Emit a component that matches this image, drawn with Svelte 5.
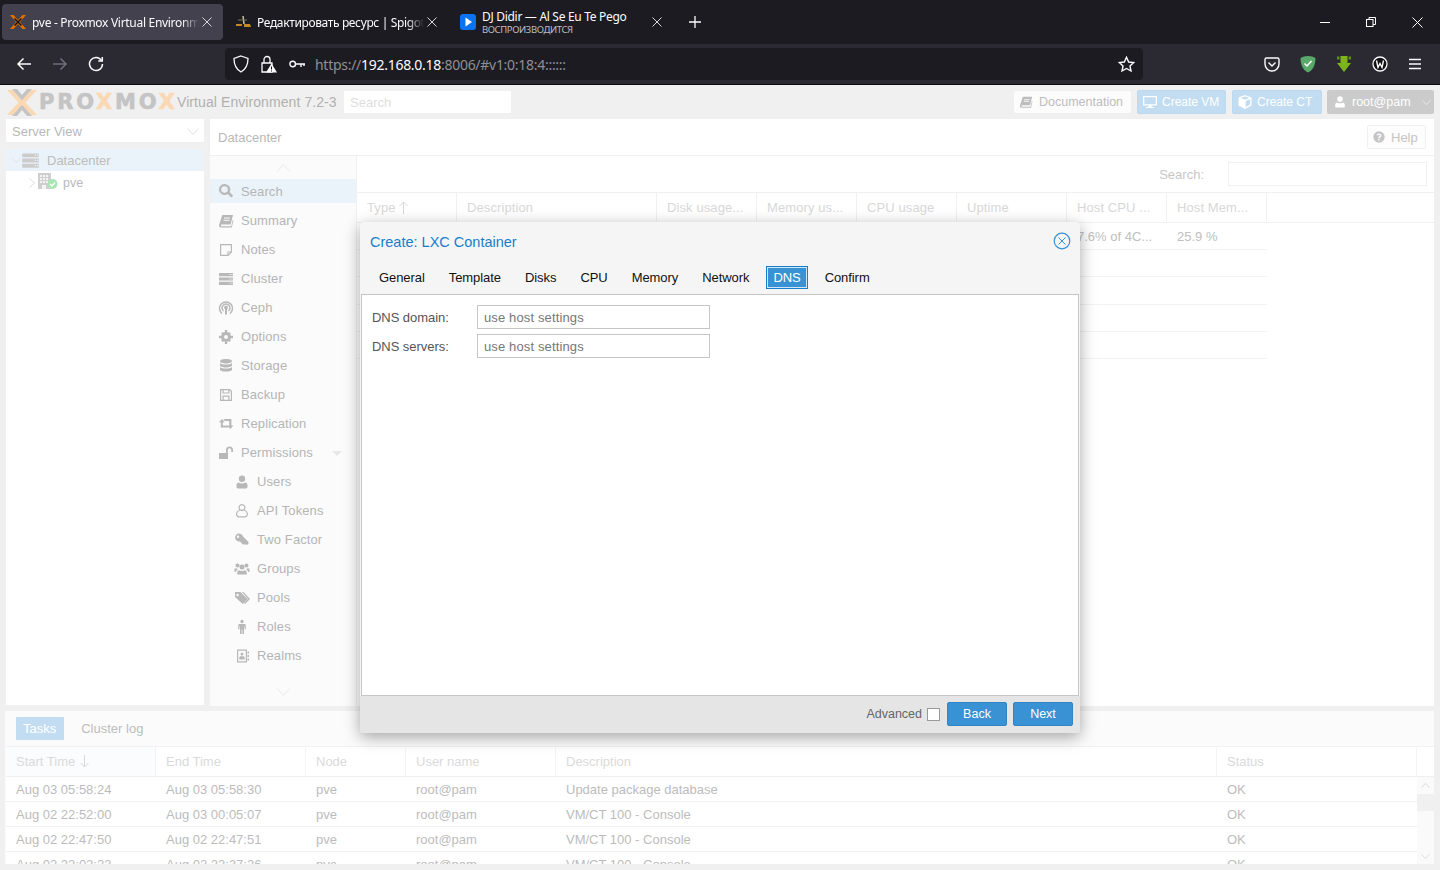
<script>
  const P = {
    search: 'M6.5 1a5.5 5.5 0 1 0 3.2 10l3.6 3.6 1.9-1.9-3.6-3.6A5.5 5.5 0 0 0 6.5 1zm0 2.2a3.3 3.3 0 1 1 0 6.6 3.3 3.3 0 0 1 0-6.6z',
    book: 'M4.3 2H15l-2.4 9.6H3.6c-.9 0-1 1.7 0 1.7h9.6l1.5-6.4.7.5-1.6 7.1H2.8C1.3 14.5.8 13 1.2 11.6zM6 4.5v1h6v-1zm-.5 2.2v1h6v-1z',
    note: 'M2 2h12v8.3L10.3 14H2zm1.2 1.2v9.6h6.2V9.4h3.4V3.2zm7.3 9 1.6-1.7h-1.6z',
    server: 'M1 2h14v3.2H1zm10.5 1v1h1V3zm2 0v1h1V3zM1 6.4h14v3.2H1zm10.5 1v1h1v-1zm2 0v1h1v-1zM1 10.8h14V14H1zm10.5 1v1h1v-1zm2 0v1h1v-1z',
    gear: 'M6.8 1h2.4v3H6.8zM6.8 12h2.4v3H6.8zM1 6.8h3v2.4H1zM12 6.8h3v2.4h-3zM3 4.7 4.7 3l1.8 1.8-1.7 1.7zM11.3 3 13 4.7l-1.8 1.8-1.7-1.7zM13 11.3 11.3 13l-1.8-1.8 1.7-1.7zM4.7 13 3 11.3l1.8-1.8 1.7 1.7zM8 3a5 5 0 1 1 0 10A5 5 0 1 1 8 3zm0 3a2 2 0 1 0 0 4 2 2 0 1 0 0-4z',
    db: 'M8 1c3.3 0 6 .9 6 2.2S11.3 5.4 8 5.4 2 4.5 2 3.2 4.7 1 8 1zM2 5c1 1 3.5 1.5 6 1.5S13 6 14 5v2.2C14 8.5 11.3 9.4 8 9.4S2 8.5 2 7.2zm0 4c1 1 3.5 1.5 6 1.5S13 10 14 9v2.4c0 1.3-2.7 2.2-6 2.2s-6-.9-6-2.2z',
    floppy: 'M2 2h10l2 2v10H2zm1.2 1.2v9.6h1.3V8.5h7v4.3h1.3V4.6l-1.2-1.4h-.1v3.3H4.5V3.2zm2.5 0v2.3h4.6V3.2zm0 6.5v3.1h4.6V9.7z',
    retweet: 'M4 3 .8 6.3h2v5.2h8l-1.7-2H4.8V6.3h2zM5.2 3l1.7 2h4.3v4.4h-2L12.4 13l3-3.6h-2V3z',
    unlock: 'M1 8h9v6H1zM8 8V5a3.5 3.5 0 0 1 7 0v2h-1.8V5a1.7 1.7 0 0 0-3.4 0v3z',
    user: 'M8 1.5a3.2 3.2 0 1 1 0 6.4 3.2 3.2 0 0 1 0-6.4zM4.5 8.5c1 .7 2.2 1 3.5 1s2.5-.3 3.5-1c1.3.3 2 1.5 2 3.2V13c0 .8-.7 1.4-1.5 1.4H4c-.8 0-1.5-.6-1.5-1.4v-1.300c0-1.700.7-2.900 2-3.200z',
    usero: 'M8 1a3.5 3.5 0 0 1 2.700 5.700c1.800.7 3.300 2.300 3.300 4.400 0 1.900-1.500 3.400-3.300 3.400H5.300A3.400 3.400 0 0 1 2 11.100c0-2.100 1.500-3.700 3.300-4.400A3.500 3.500 0 0 1 8 1zm0 1.200a2.300 2.300 0 1 0 0 4.600 2.300 2.300 0 0 0 0-4.600zM6.200 7.600c-1.800.5-3 1.900-3 3.500 0 1.200 1 2.200 2.100 2.200h5.400c1.100 0 2.100-1 2.100-2.200 0-1.600-1.200-3-3-3.500a3.500 3.500 0 0 1-3.600 0z',
    key: 'M5 1.5a4 4 0 0 1 3.800 2.800L14.500 10v1.500L13 13l-1-1-.9.9-1-1-.9.9L6 9.400A4 4 0 1 1 5 1.500zM4 3.500a1.200 1.200 0 1 0 0 2.400 1.200 1.200 0 0 0 0-2.400z',
    users: 'M3.5 2.5a2 2 0 1 1 0 4 2 2 0 0 1 0-4zm9 0a2 2 0 1 1 0 4 2 2 0 0 1 0-4zM8 3.500a2.500 2.500 0 1 1 0 5 2.500 2.500 0 0 1 0-5zM.5 7.500h3c-.3.5-.2 1-.1 1.500-.8.4-1.400 1-1.700 2H.5zm12 0h3V11h-1.200c-.3-1-.9-1.600-1.700-2 .1-.5.2-1-.1-1.500zM5 9.200c1.800 1 4.200 1 6 0 1.200.5 1.800 1.400 1.800 2.800v1.500H3.200V12c0-1.400.6-2.300 1.800-2.800z',
    tags: 'M1 2h5.500l7 7-4.800 5-7.700-7zm2.500 1.800a1.200 1.200 0 1 0 0 2.400 1.200 1.200 0 0 0 0-2.400zM8 2h1.500l6.500 7-5 5-1-1 4-4z',
    male: 'M8 .8a1.700 1.700 0 1 1 0 3.400A1.700 1.700 0 0 1 8 .8zM5 5h6l.8 1v4.300h-1.300V7h-.5v8H8.400v-4.500h-.8V15H6V7h-.5v3.300H4.200V6z',
    contact: 'M3 1.500h10v13H3zm1.200 1.200v10.600h7.600V2.700zM8 4.500a1.500 1.500 0 1 1 0 3 1.500 1.500 0 0 1 0-3zM5.300 11.500V9.800c0-.9.700-1.500 1.300-1.500h2.800c.6 0 1.300.6 1.300 1.500v1.700zM13.500 3.500H15v2h-1.500zm0 3.500H15v2h-1.500zm0 3.500H15v2h-1.500z',
    monitor: 'M1 2h14v9.500H9.500v1.500H12v1H4v-1h2.500v-1.500H1zm1.300 1.300v6.900h11.400V3.300z',
    cube: 'M8 1l6.500 2.500v8L8 15l-6.500-3.500v-8zM3.700 4 8 5.700 12.300 4 8 2.400zM8.700 7v6l4.500-2.400V5.200z',
    help: 'M8 1.500a6.500 6.500 0 1 1 0 13 6.500 6.500 0 0 1 0-13zM8 4C6.500 4 5.500 4.800 5.300 6l1.500.4c.1-.6.5-1 1.200-1s1.100.4 1.100.9c0 1-2 1.100-2 2.900v.3h1.700c0-1.300 2-1.300 2-3.300C10.800 4.900 9.600 4 8 4zM7.100 10.300V12h1.700v-1.700z'
  };

  const menu = [
    { t: 'Search', i: 'search', sel: true },
    { t: 'Summary', i: 'book' },
    { t: 'Notes', i: 'note' },
    { t: 'Cluster', i: 'server' },
    { t: 'Ceph', i: 'ceph' },
    { t: 'Options', i: 'gear' },
    { t: 'Storage', i: 'db' },
    { t: 'Backup', i: 'floppy' },
    { t: 'Replication', i: 'retweet' },
    { t: 'Permissions', i: 'unlock', caret: true },
    { t: 'Users', i: 'user', sub: true },
    { t: 'API Tokens', i: 'usero', sub: true },
    { t: 'Two Factor', i: 'key', sub: true },
    { t: 'Groups', i: 'users', sub: true },
    { t: 'Pools', i: 'tags', sub: true },
    { t: 'Roles', i: 'male', sub: true },
    { t: 'Realms', i: 'contact', sub: true }
  ];

  const cols = [
    ['Type', 100], ['Description', 200], ['Disk usage...', 100], ['Memory us...', 100],
    ['CPU usage', 100], ['Uptime', 110], ['Host CPU ...', 100], ['Host Mem...', 100]
  ];
  const resCells = ['', '', '', '', '', '', '7.6% of 4C...', '25.9 %'];
  const tabs = ['General', 'Template', 'Disks', 'CPU', 'Memory', 'Network', 'DNS', 'Confirm'];

  const taskCols = [
    ['Start Time', 150], ['End Time', 150], ['Node', 100], ['User name', 150],
    ['Description', 661], ['Status', 200]
  ];
  const tasks = [
    ['Aug 03 05:58:24', 'Aug 03 05:58:30', 'pve', 'root@pam', 'Update package database', 'OK'],
    ['Aug 02 22:52:00', 'Aug 03 00:05:07', 'pve', 'root@pam', 'VM/CT 100 - Console', 'OK'],
    ['Aug 02 22:47:50', 'Aug 02 22:47:51', 'pve', 'root@pam', 'VM/CT 100 - Console', 'OK'],
    ['Aug 02 22:02:23', 'Aug 02 22:37:26', 'pve', 'root@pam', 'VM/CT 100 - Console', 'OK']
  ];
</script>

{#snippet ico(name, size = 16)}
  {#if name === 'ceph'}
    <svg class="ic" width={size} height={size} viewBox="0 0 16 16" fill="none" stroke="currentColor" stroke-width="1.5">
      <path d="M4 13.5A6.5 6.5 0 1 1 12 13.5" />
      <path d="M5.5 11A4 4 0 1 1 10.5 11" />
      <circle cx="8" cy="7.5" r="1.2" fill="currentColor" />
      <path d="M8 9v5.5" stroke-width="2" />
    </svg>
  {:else}
    <svg class="ic" width={size} height={size} viewBox="0 0 16 16" fill="currentColor" fill-rule={name === 'gear' ? 'nonzero' : 'evenodd'}><path d={P[name]} /></svg>
  {/if}
{/snippet}

{#snippet chev(w = 12, h = 7, dir = 'down')}
  <svg class="chev" width={w} height={h} viewBox="0 0 12 7" fill="none" stroke="currentColor" stroke-width="1">
    {#if dir === 'down'}<path d="M.5.5 6 6.5 11.5.5" />{:else}<path d="M.5 6.5 6 .5l5.5 6" />{/if}
  </svg>
{/snippet}

{#snippet closex()}
  <svg class="x" width="10" height="10" viewBox="0 0 10 10" fill="none" stroke="#d8d8dc" stroke-width="1"><path d="M.5.5l9 9M9.5.5l-9 9" /></svg>
{/snippet}

<div class="app">
  <div class="tabbar">
    <div class="tab active">
      <svg class="fav" width="16" height="16" viewBox="0 0 16 16"><path d="M0 1h3.5L8 6l4.5-5H16l-6 7 6 7h-3.500L8 10l-4.500 5H0l6-7z" fill="#e57000" /><path d="M5 4 8 7l3-3 1 1-3 3 3 3-1 1-3-3-3 3-1-1 3-3-3-3z" fill="#111" /></svg>
      <span class="tt">pve - Proxmox Virtual Environment</span>
      {@render closex()}
    </div>
    <div class="tab">
      <svg class="fav" width="16" height="16" viewBox="0 0 16 16"><path d="M8 2 9 10" stroke="#c9c39a" stroke-width="1.5" /><path d="M1 10h6v2H1zM9 10h6l1 3H9z" fill="#c58a1f" /><path d="M3 6h9" stroke="#776" stroke-width="1" /></svg>
      <span class="tt">Редактировать ресурс | SpigotMC - High Performance</span>
      {@render closex()}
    </div>
    <div class="tab media">
      <svg class="fav" width="16" height="16" viewBox="0 0 16 16"><rect width="16" height="16" rx="3" fill="#0a74f0" /><path d="M5.5 3.5 12 8l-6.5 4.500z" fill="#fff" /></svg>
      <span class="tt2">
        <span class="l1">DJ Didir — Al Se Eu Te Pego</span>
        <span class="l2">ВОСПРОИЗВОДИТСЯ</span>
      </span>
      {@render closex()}
    </div>
    <svg class="plus" width="12" height="12" viewBox="0 0 12 12" stroke="#fbfbfe" stroke-width="1.3"><path d="M6 0v12M0 6h12" /></svg>
    <div class="winctl">
      <svg width="10" height="10" viewBox="0 0 10 10" stroke="#fff" fill="none"><path d="M0 5.5h10" /></svg>
      <svg width="10" height="10" viewBox="0 0 10 10" stroke="#fff" fill="none"><rect x=".5" y="2.5" width="6.5" height="7" /><path d="M3 2.5V.5h6.5v7H7" /></svg>
      <svg width="11" height="11" viewBox="0 0 11 11" stroke="#fff" fill="none"><path d="M.5.5l10 10M10.5.5l-10 10" /></svg>
    </div>
  </div>

  <div class="toolbar">
    <div class="nav">
      <svg width="16" height="16" viewBox="0 0 16 16" fill="none" stroke="#fbfbfe" stroke-width="1.5"><path d="M15 8H2M7.5 2.5 2 8l5.5 5.5" /></svg>
      <svg width="16" height="16" viewBox="0 0 16 16" fill="none" stroke="#6f6e78" stroke-width="1.5"><path d="M1 8h13M8.5 2.5 14 8l-5.500 5.500" /></svg>
      <svg width="16" height="16" viewBox="0 0 16 16" fill="none" stroke="#fbfbfe" stroke-width="1.5"><path d="M13.5 4.5A6.5 6.5 0 1 0 14.5 8" /><path d="M14.3 1v4h-4" /></svg>
    </div>
    <div class="urlbar">
      <svg width="16" height="18" viewBox="0 0 16 18" fill="none" stroke="#fbfbfe" stroke-width="1.3"><path d="M8 1 15 3.5c0 6.5-2.5 11-7 13.5C3.5 14.5 1 10 1 3.5z" /></svg>
      <svg class="lock" width="18" height="18" viewBox="0 0 18 18"><path d="M3 8h10v9H3z" fill="none" stroke="#fbfbfe" stroke-width="1.3" /><path d="M5 8V4.5a3 3 0 0 1 6 0V8" fill="none" stroke="#fbfbfe" stroke-width="1.3" /><path d="M12.5 8.5 18 17.5H7z" fill="#fbfbfe" /><path d="M12.5 11.5v3M12.5 15.5v1" stroke="#111" /></svg>
      <svg class="keyi" width="16" height="10" viewBox="0 0 16 10" fill="none" stroke="#fbfbfe" stroke-width="1.4"><circle cx="3.7" cy="5" r="2.8" /><path d="M6.5 5H16M12 5v3M15 5v2" /></svg>
      <span class="url"><span>https://</span><b>192.168.0.18</b><span>:8006/#v1:0:18:4::::::</span></span>
      <svg class="star" width="17" height="17" viewBox="0 0 17 17" fill="none" stroke="#fbfbfe" stroke-width="1.4"><path d="M8.5 1.3 10.7 6l5 .6-3.7 3.4 1 5-4.5-2.500L4 15l1-5-3.700-3.400 5-.6z" /></svg>
    </div>
    <div class="ext">
      <svg width="16" height="15" viewBox="0 0 16 15" fill="none" stroke="#fbfbfe" stroke-width="1.4"><path d="M2.5 1h11A1.5 1.5 0 0 1 15 2.5V7A7 7 0 0 1 1 7V2.5A1.5 1.5 0 0 1 2.5 1z" /><path d="M4.5 5.5 8 9l3.5-3.500" /></svg>
      <svg width="16" height="18" viewBox="0 0 16 18"><path d="M8 1c3 0 5.5.8 7.5 2C15.5 10 13 15 8 17.5 3 15 .5 10 .5 3 2.5 1.800 5 1 8 1z" fill="#59a96b" /><path d="M4.5 8.5 7 11l4.5-5" fill="none" stroke="#fff" stroke-width="1.5" /></svg>
      <svg width="16" height="18" viewBox="0 0 16 18"><path d="M4.5 1h7v7H15l-7 9-7-9h3.5z" fill="#7db51b" /><path d="M1 1.5h2.5v3H1zM12.5 1.5H15v3h-2.500z" fill="#5d8f10" /></svg>
      <svg width="16" height="16" viewBox="0 0 16 16"><circle cx="8" cy="8" r="7" fill="#111" stroke="#fbfbfe" stroke-width="1.3" /><path d="M4.5 4.5 6 11.5l2-4 2 4 1.5-7" fill="none" stroke="#fbfbfe" stroke-width="1.4" /></svg>
      <svg width="14" height="12" viewBox="0 0 14 12" stroke="#fbfbfe" stroke-width="1.3"><path d="M1 1.5h12M1 6h12M1 10.5h12" /></svg>
    </div>
  </div>

  <div class="page">
    <header class="hdr">
      <svg class="logoX" width="30" height="27" viewBox="0 0 30 27"><path d="M0 1h6.5L15 10.5 23.5 1H30L18.500 13.500 30 26h-6.500L15 16.500 6.500 26H0l11.500-12.500z" fill="#fbd8b4" /><path d="M5 0h5l5 6 5-6h5L17 9l-2 2.500L13 9zM13 18l2-2 2 2 8 9h-5l-5-6-5 6H5z" fill="#c4c4c4" /></svg>
      <span class="brand"><span>PRO</span><i>X</i><span>MO</span><i>X</i></span>
      <span class="ver">Virtual Environment 7.2-3</span>
      <span class="hsearch">Search</span>
      <span class="spacer"></span>
      <span class="hbtn doc">{@render ico('book', 14)}Documentation</span>
      <span class="hbtn blue">{@render ico('monitor', 16)}Create VM</span>
      <span class="hbtn blue ct">{@render ico('cube', 16)}Create CT</span>
      <span class="hbtn grey">{@render ico('user', 14)}root@pam{@render chev(9, 5)}</span>
    </header>

    <div class="work">
      <aside class="left">
        <div class="view"><span>Server View</span>{@render chev()}</div>
        <div class="tree">
          <div class="node dc">{@render chev(10, 6)}<span class="dci">{@render ico('server', 19)}</span><span>Datacenter</span></div>
          <div class="node pve">
            <svg class="rt" width="6" height="10" viewBox="0 0 6 10" fill="none" stroke="#dcdcdc"><path d="M.5.5 5.5 5 .5 9.5" /></svg>
            <span class="host">
              <svg width="20" height="17" viewBox="0 0 20 17"><path d="M0 0h13v16H0z" fill="#cfcfcf" /><path d="M2 2h2v2H2zm3 0h2v2H5zm3 0h2v2H8zM2 5h2v2H2zm3 0h2v2H5zm3 0h2v2H8zM2 8h2v2H2zm3 0h2v2H5zm3 0h2v2H8zM4 12h4v4H4z" fill="#f4f4f4" /><circle cx="14.5" cy="11" r="5" fill="#a9e4b4" /><path d="M12 11l2 2 3-3.500" fill="none" stroke="#fff" stroke-width="1.3" /></svg>
            </span>
            <span>pve</span>
          </div>
        </div>
      </aside>

      <main class="center">
        <div class="ctitle"><span>Datacenter</span><span class="helpb">{@render ico('help', 14)}Help</span></div>
        <div class="cbody">
          <nav class="menu">
            <div class="arrow">{@render chev(15, 8, 'up')}</div>
            {#each menu as m}
              <div class="mi" class:sel={m.sel} class:sub={m.sub}>
                <span class="mic">{@render ico(m.i)}</span>
                <span>{m.t}</span>
                {#if m.caret}<span class="caret"></span>{/if}
              </div>
            {/each}
            <div class="arrow down">{@render chev(15, 8)}</div>
          </nav>
          <section class="resgrid">
            <div class="rtool"><span>Search:</span><span class="rinput"></span></div>
            <div class="rhead">
              {#each cols as c, i}
                <div class="cell" style="width:{c[1]}px">{c[0]}{#if i === 0}<svg class="sort" width="9" height="13" viewBox="0 0 9 13" fill="none" stroke="#d8d8d8"><path d="M4.5 13V1M.5 5l4-4 4 4" /></svg>{/if}</div>
              {/each}
            </div>
            <div class="rrows">
              <div class="rrow">
                {#each cols as c, i}<div class="cell" style="width:{c[1]}px">{resCells[i]}</div>{/each}
              </div>
              <div class="rrow"></div><div class="rrow"></div><div class="rrow"></div><div class="rrow"></div>
            </div>
          </section>
        </div>
      </main>
    </div>

    <section class="log">
      <div class="ltabs"><span class="ltab on">Tasks</span><span class="ltab">Cluster log</span></div>
      <div class="lgrid">
        <div class="lhead">
          {#each taskCols as c, i}
            <div class="lc" class:first={i === 0} style="width:{c[1]}px">{c[0]}{#if i === 0}<svg class="sort" width="9" height="13" viewBox="0 0 9 13" fill="none" stroke="#d8d8d8"><path d="M4.5 0v12M.5 8l4 4 4-4" /></svg>{/if}</div>
          {/each}
          <div class="lc end"></div>
        </div>
        <div class="lwrap">
          <div class="lrows">
            {#each tasks as t}
              <div class="lrow">
                {#each t as v, i}<div class="lc" style="width:{taskCols[i][1]}px">{v}</div>{/each}
              </div>
            {/each}
          </div>
          <div class="sb">
            {@render chev(9, 5, 'up')}
            <span class="thumb"></span>
            <span class="spacer"></span>
            {@render chev(9, 5)}
          </div>
        </div>
      </div>
    </section>
  </div>

  <div class="modal" role="dialog">
    <div class="mhead">
      <span class="mtitle">Create: LXC Container</span>
      <svg class="mclose" width="18" height="18" viewBox="0 0 18 18" fill="none" stroke="#3892d4"><circle cx="9" cy="9" r="7.8" stroke-width="1.2" /><path d="M5.5 5.5l7 7M12.5 5.5l-7 7" /></svg>
    </div>
    <div class="mtabs">
      {#each tabs as t}<span class="mtab" class:on={t === 'DNS'}>{t}</span>{/each}
    </div>
    <div class="mbody">
      <div class="frow"><label for="d1">DNS domain:</label><input id="d1" readonly value="use host settings" /></div>
      <div class="frow"><label for="d2">DNS servers:</label><input id="d2" readonly value="use host settings" /></div>
    </div>
    <div class="mfoot">
      <span class="adv">Advanced</span><span class="cb"></span>
      <button>Back</button><button>Next</button>
    </div>
  </div>
</div>

<style>
  :global(body) { margin: 0; background: #f0f0f0; }
  .app { position: relative; width: 1440px; height: 870px; overflow: hidden; display: flex; flex-direction: column; font: 13px "Liberation Sans", Arial, sans-serif; color: #b5b5b5; }
  .ic, .chev { display: block; flex: none; }
  .spacer { flex: 1; }

  .tabbar { height: 44px; background: #1c1b22; display: flex; align-items: flex-start; padding: 4px 0 0 2px; box-sizing: border-box; font: 12px "Noto Sans", sans-serif; letter-spacing: -.3px; color: #fbfbfe; flex: none; }
  .tab { position: relative; width: 221px; height: 36px; display: flex; align-items: center; padding: 0 8px; box-sizing: border-box; border-radius: 4px; margin-right: 4px; flex: none; }
  .tab.active { background: #42414d; }
  .fav { flex: none; margin-right: 6px; }
  .tt { width: 167px; flex: none; white-space: nowrap; overflow: hidden; -webkit-mask-image: linear-gradient(90deg, #000 150px, transparent 167px); mask-image: linear-gradient(90deg, #000 150px, transparent 167px); }
  .tab + .tab .tt { letter-spacing: -.36px; }
  .x { position: absolute; right: 11px; top: 13px; }
  .tab.media { width: 223px; padding-left: 8px; margin-right: 0; }
  .tab.media .x { right: 13px; }
  .tt2 { display: flex; flex-direction: column; line-height: 13px; padding-top: 2px; }
  .l2 { font-size: 9.5px; color: #bdbdc2; letter-spacing: -.4px; white-space: nowrap; }
  .plus { margin: 12px 0 0 14px; flex: none; }
  .winctl { margin-left: auto; width: 120px; height: 36px; display: flex; align-items: center; gap: 36px; }

  .toolbar { height: 41px; background: #2b2a33; border-bottom: 1px solid #0c0c0d; box-sizing: border-box; display: flex; align-items: center; flex: none; }
  .nav { width: 225px; display: flex; gap: 20px; padding-left: 16px; box-sizing: border-box; }
  .urlbar { width: 918px; height: 32px; background: #1c1b22; border-radius: 4px; display: flex; align-items: center; padding: 0 8px; box-sizing: border-box; color: #8f8f95; }
  .lock { margin-left: 10px; }
  .keyi { margin-left: 12px; }
  .url { margin-left: 10px; font: 14px "Noto Sans", sans-serif; letter-spacing: -.28px; flex: 1; white-space: nowrap; }
  .url b { font-weight: 400; color: #fbfbfe; }
  .ext { flex: 1; display: flex; align-items: center; gap: 20px; padding-left: 121px; }

  .page { flex: 1; display: flex; flex-direction: column; min-height: 0; }
  .hdr { height: 34px; display: flex; align-items: center; padding-left: 7px; padding-right: 6px; box-sizing: border-box; flex: none; }
  .brand { font: bold 21px "DejaVu Sans", sans-serif; letter-spacing: 2.8px; color: #c4c4c4; margin-left: 2px; width: 138px; white-space: nowrap; overflow: hidden; -webkit-text-stroke: .6px currentColor; }
  .brand i { font-style: normal; color: #fbd8b4; }
  .ver { font-size: 14px; letter-spacing: .08px; color: #b0b0b0; width: 167px; white-space: nowrap; }
  .hsearch { width: 167px; height: 22px; background: #fff; box-sizing: border-box; padding: 0 6px; line-height: 23px; color: #dedede; }
  .hbtn { height: 24px; display: flex; align-items: center; box-sizing: border-box; margin-left: 6px; border-radius: 2px; padding: 0 8px 0 5px; gap: 7px; white-space: nowrap; }
  .doc { width: 117px; height: 22px; background: #fcfcfc; color: #bdbdbd; font-size: 12.5px; gap: 6px; }
  .blue { width: 89px; background: #c2ddf2; color: #fff; border: 1px solid #bbdaf1; gap: 4px; padding-left: 4px; font-size: 12px; }
  .ct { width: 90px; gap: 4px; }
  .grey { width: 107px; margin-left: 5px; background: #cbcbcb; color: #fff; gap: 5px; padding-left: 6px; font-size: 12.5px; }
  .grey .chev { margin-left: 6px; color: #f3f3f3; }

  .work { height: 587px; display: flex; padding-left: 6px; gap: 6px; flex: none; }
  .left { width: 198px; display: flex; flex-direction: column; height: 586px; }
  .view { height: 23px; background: #fff; display: flex; align-items: center; justify-content: space-between; padding: 1px 5px 0 6px; box-sizing: border-box; color: #b8b8b8; margin-bottom: 7px; flex: none; }
  .view .chev { color: #e0e0e0; }
  .tree { flex: 1; background: #fff; }
  .node { display: flex; align-items: center; }
  .dc { height: 22px; background: #ebf3fa; color: #bcbcbc; padding-left: 5px; }
  .dc .chev { color: #dedede; }
  .dci { margin: 0 7px 0 0; color: #cccccc; }
  .pve { height: 23px; padding-left: 23px; color: #b9b9b9; font-size: 12.5px; }
  .rt { margin-right: 3px; }
  .host { margin-right: 5px; }

  .center { width: 1224px; background: #fff; display: flex; flex-direction: column; }
  .ctitle { height: 37px; box-sizing: border-box; border-bottom: 1px solid #f0f0f0; display: flex; align-items: center; justify-content: space-between; padding: 0 8px; color: #b8b8b8; flex: none; }
  .helpb { width: 59px; height: 24px; box-sizing: border-box; border: 1px solid #f0f0f0; border-radius: 2px; background: #fdfdfd; display: flex; align-items: center; gap: 5px; padding-left: 4px; color: #c5c5c5; }
  .cbody { flex: 1; display: flex; min-height: 0; }
  .menu { width: 146px; background: #fbfbfb; flex: none; display: flex; flex-direction: column; border-right: 1px solid #f0f0f0; }
  .arrow { height: 23px; display: flex; justify-content: center; align-items: center; color: #efefef; flex: none; }
  .arrow.down { height: 28px; margin-top: 8px; }
  .mi { height: 29px; display: flex; align-items: center; padding-left: 8px; flex: none; position: relative; color: #b5b5b5; letter-spacing: .1px; }
  .mi.sel { background: #ebf3fa; height: 24px; margin-bottom: 3px; }
  .mi.sub { padding-left: 24px; }
  .mic { width: 23px; color: #b8b8b8; }
  .caret { position: absolute; left: 122px; top: 13px; border: 5px solid transparent; border-top-color: #e8e8e8; border-bottom: 0; }
  .resgrid { flex: 1; display: flex; flex-direction: column; min-width: 0; }
  .rtool { height: 36px; display: flex; align-items: center; justify-content: flex-end; gap: 24px; padding-right: 7px; color: #c8c8c8; flex: none; }
  .rinput { width: 199px; height: 24px; box-sizing: border-box; border: 1px solid #f0f0f0; }
  .rhead { height: 31px; box-sizing: border-box; border-top: 1px solid #f0f0f0; border-bottom: 1px solid #f0f0f0; display: flex; flex: none; padding-bottom: 1px; color: #d8d8d8; letter-spacing: .1px; }
  .rhead .cell { border-right: 1px solid #f0f0f0; box-sizing: border-box; display: flex; align-items: center; gap: 3px; padding: 0 10px; white-space: nowrap; flex: none; overflow: hidden; }
  .rrows { width: 910px; }
  .rrow { height: 27.2px; box-sizing: border-box; border-bottom: 1px solid #f3f3f3; display: flex; }
  .rrow .cell { padding: 0 10px; box-sizing: border-box; line-height: 27px; flex: none; white-space: nowrap; color: #c0c0c0; }

  .log { margin: 5px 6px 0 5px; height: 153px; background: #fbfbfb; display: flex; flex-direction: column; flex: none; overflow: hidden; }
  .ltabs { height: 35px; display: flex; align-items: flex-start; padding: 6px 0 0 11px; box-sizing: border-box; flex: none; }
  .ltab { height: 23px; line-height: 24px; padding: 0 7px; color: #bdbdbd; margin-right: 10px; }
  .ltab.on { background: #c2ddf2; color: #fff; border-radius: 1px; padding-right: 8px; }
  .lgrid { flex: 1; background: #fff; margin-left: 1px; min-height: 0; }
  .lhead { height: 31px; box-sizing: border-box; border-top: 1px solid #f2f2f2; border-bottom: 1px solid #f0f0f0; display: flex; color: #dadada; }
  .lc { padding: 0 10px; box-sizing: border-box; flex: none; white-space: nowrap; display: flex; align-items: center; gap: 5px; }
  .lhead .lc { border-right: 1px solid #f4f4f4; }
  .lhead .first { background: #fafcfe; }
  .lhead .end { flex: 1; border-right: 0; }
  .lwrap { display: flex; }
  .lrows { width: 1411px; flex: none; }
  .lrow { height: 25px; box-sizing: border-box; border-bottom: 1px solid #f0f0f0; display: flex; color: #bcbcbc; padding-top: 1px; }
  .sb { width: 17px; height: 88px; display: flex; flex-direction: column; align-items: center; background: #fafafa; color: #d0d0d0; padding: 6px 0; box-sizing: border-box; }
  .thumb { width: 17px; height: 17px; background: #f0f0f0; margin-top: 6px; }

  .modal { position: absolute; left: 360px; top: 222px; width: 720px; height: 511px; box-sizing: border-box; background: #f5f5f5; border-radius: 3px; box-shadow: 0 4px 16px rgba(0, 0, 0, .35); display: flex; flex-direction: column; color: #444; overflow: hidden; }
  .mhead { height: 40px; display: flex; align-items: center; justify-content: space-between; padding: 0 9px 0 10px; flex: none; }
  .mclose { margin-top: -2px; }
  .mtitle { font-size: 14.5px; color: #157fcc; white-space: nowrap; }
  .mtabs { height: 32px; display: flex; padding: 0 0 1px 12px; box-sizing: border-box; align-items: center; flex: none; }
  .mtab { color: #111; padding: 3px 6px; border: 1px solid transparent; margin-right: 10px; line-height: 15px; letter-spacing: -.07px; }
  .mtab.on { background: #3892d4; color: #fff; border-color: #157fcc; box-shadow: inset 0 0 0 1px #cfe6f7; }
  .mbody { flex: 1; margin: 0 1px; background: #fff; border: 1px solid #c6c6c6; padding: 10px 10px 0; display: flex; flex-direction: column; gap: 5px; min-height: 0; }
  .frow { display: flex; align-items: center; height: 24px; }
  label { width: 105px; color: #555; flex: none; letter-spacing: -.05px; }
  input { width: 233px; height: 24px; box-sizing: border-box; border: 1px solid #c6c6c6; padding: 0 6px; font: 13px "Liberation Sans", sans-serif; letter-spacing: .13px; color: #777; outline: 0; }
  .mfoot { height: 37px; background: #e5e5e5; display: flex; align-items: center; justify-content: flex-end; padding: 0 7px 1px 0; box-sizing: border-box; flex: none; }
  .adv { color: #666; margin-right: 5px; font-size: 12.5px; }
  .cb { width: 13px; height: 13px; box-sizing: border-box; border: 1px solid #999; background: #fff; margin-right: 7px; }
  button { width: 60px; height: 24px; background: #3892d4; color: #fff; border: 1px solid #2f85c5; border-radius: 2px; font: 12.5px "Liberation Sans", sans-serif; padding: 0; }
  button + button { margin-left: 6px; }
</style>
